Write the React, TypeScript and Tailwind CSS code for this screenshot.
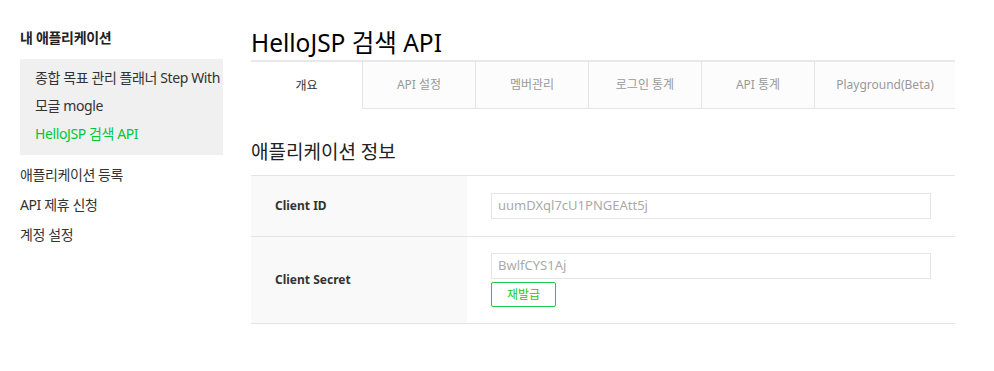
import React from "react";

const font = { fontFamily: '"Noto Sans", "Noto Sans CJK KR", sans-serif' };

export default function App() {
  const tabs = ["개요", "API 설정", "멤버관리", "로그인 통계", "API 통계", "Playground(Beta)"];
  return (
    <div className="flex w-[994px] h-[371px] bg-white text-[#333]" style={font}>
      <aside className="w-[223px] pl-[20px] pt-[28px] shrink-0">
        <div className="text-[14px] font-bold leading-[20px] text-[#222] tracking-[-0.3px]">내 애플리케이션</div>
        <div className="mt-[11px] bg-[#f0f0f0] pt-[5px] pb-[7px] pl-[15px] whitespace-nowrap">
          <div className="h-[28px] leading-[28px] text-[14px] tracking-[-0.4px]">종합 목표 관리 플래너 Step With</div>
          <div className="h-[28px] leading-[28px] text-[14px] tracking-[-0.4px]">모글 mogle</div>
          <div className="h-[28px] leading-[28px] text-[14px] text-[#00c73c] tracking-[-0.4px]">HelloJSP 검색 API</div>
        </div>
        <div className="mt-[5px]">
          <div className="h-[30px] leading-[30px] text-[14px] tracking-[-0.4px]">애플리케이션 등록</div>
          <div className="h-[30px] leading-[30px] text-[14px] tracking-[-0.4px]">API 제휴 신청</div>
          <div className="h-[30px] leading-[30px] text-[14px] tracking-[-0.4px]">계정 설정</div>
        </div>
      </aside>
      <main className="ml-[28px] w-[704px] pt-[26px]">
        <h1 className="h-[34px] leading-[34px] text-[24.5px] text-black">HelloJSP 검색 API</h1>
        <div className="border-t-2 border-[#e8e8e8] flex h-[49px]">
          {tabs.map((t, i) => (
            <div
              key={t}
              className={
                i === 0
                  ? "w-[111px] bg-white flex items-center justify-center text-[12px] text-[#333]"
                  : i === tabs.length - 1
                  ? "flex-1 bg-[#fcfcfc] border-l border-b border-[#e5e5e5] flex items-center justify-center text-[12px] text-[#999]"
                  : "w-[113px] bg-[#fcfcfc] border-l border-b border-[#e5e5e5] flex items-center justify-center text-[12px] text-[#999]"
              }
            >
              {t}
            </div>
          ))}
        </div>
        <h2 className="mt-[28px] h-[30px] leading-[30px] text-[19px] text-[#222]">애플리케이션 정보</h2>
        <div className="mt-[8px] border-t border-[#e5e5e5]">
          <div className="flex h-[61px] border-b border-[#e5e5e5]">
            <div className="w-[216px] bg-[#f9f9f9] pl-[24px] flex items-center text-[12px] font-bold text-[#333]">Client ID</div>
            <div className="pl-[24px] flex items-center">
              <div className="w-[440px] h-[26px] border border-[#e5e5e5] pl-[6px] flex items-center text-[13px] text-[#aaa]">uumDXql7cU1PNGEAtt5j</div>
            </div>
          </div>
          <div className="flex h-[87px] border-b border-[#e5e5e5]">
            <div className="w-[216px] bg-[#f9f9f9] pl-[24px] flex items-center text-[12px] font-bold text-[#333]">Client Secret</div>
            <div className="pl-[24px] pt-[16px]">
              <div className="w-[440px] h-[26px] border border-[#e5e5e5] pl-[6px] flex items-center text-[13px] text-[#aaa]">BwlfCYS1Aj</div>
              <button className="mt-[3px] w-[65px] h-[25px] border border-[#1ec94a] rounded-[2px] text-[12px] text-[#1ec800] flex items-center justify-center bg-white">재발급</button>
            </div>
          </div>
        </div>
      </main>
    </div>
  );
}
